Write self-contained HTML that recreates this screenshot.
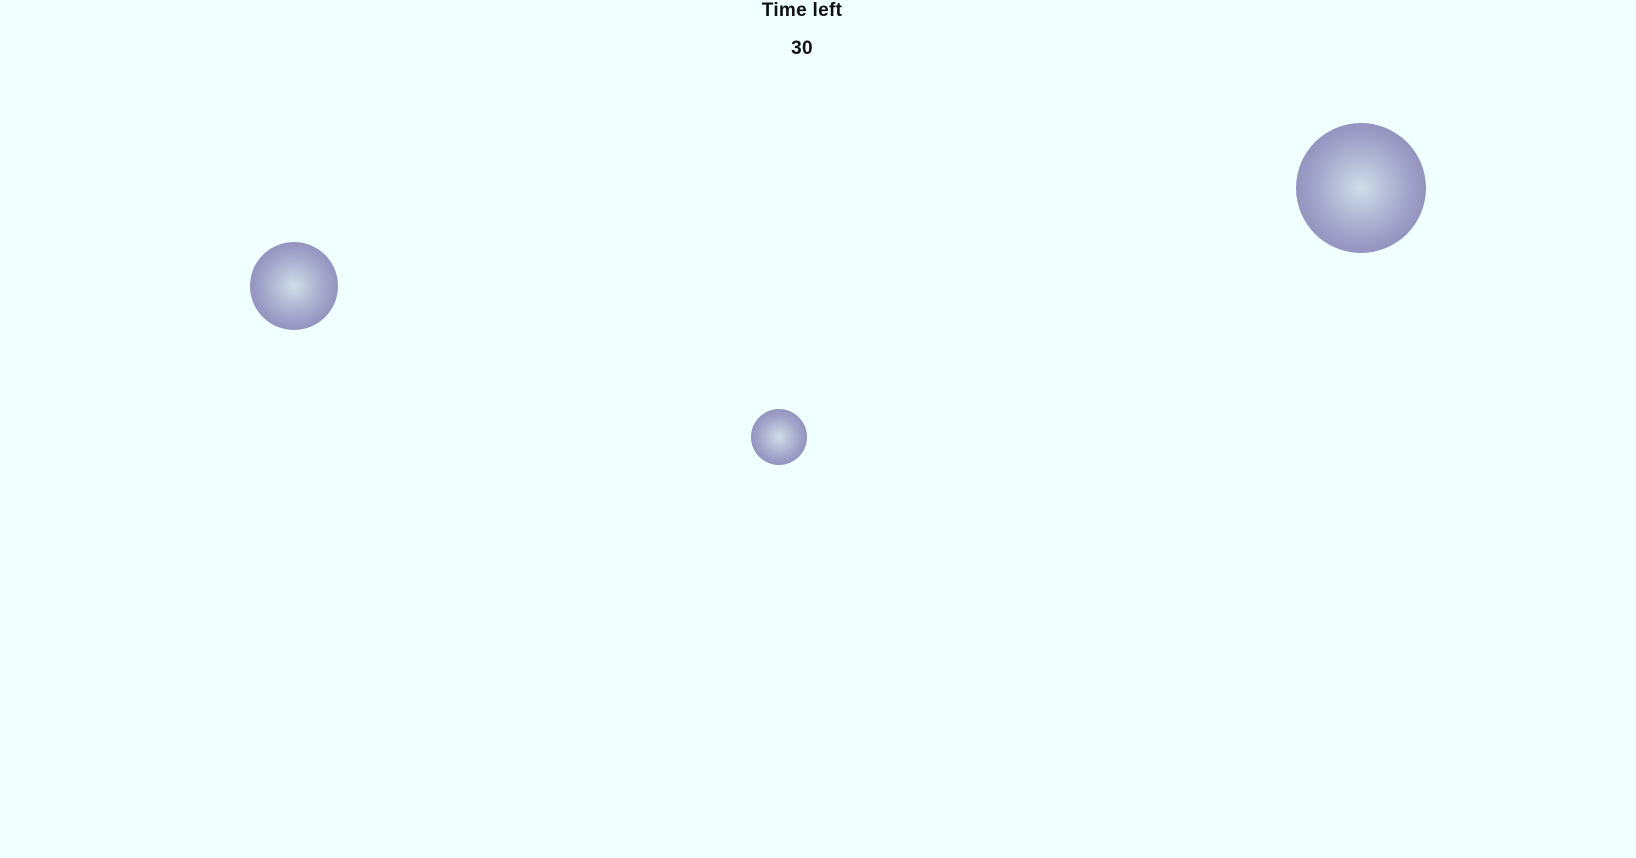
<!DOCTYPE html>
<html><head><style>
html,body{margin:0;padding:0;width:1636px;height:858px;background:#f0ffff;overflow:hidden;font-family:"Liberation Sans",sans-serif;}
.t{position:absolute;left:0;width:1604px;text-align:center;font-weight:bold;font-size:19px;color:#111;letter-spacing:0.3px;}
.b{position:absolute;border-radius:50%;background:radial-gradient(circle at center,#cfdde8 0%,#a3a5ca 50%,#7d7bb0 100%);}
</style></head><body>
<div class="t" style="top:0px;">Time left</div>
<div class="t" style="top:38px;">30</div>
<div class="b" style="left:250px;top:242px;width:88px;height:88px;"></div>
<div class="b" style="left:751px;top:409px;width:56px;height:56px;"></div>
<div class="b" style="left:1296px;top:123px;width:130px;height:130px;"></div>
</body></html>
